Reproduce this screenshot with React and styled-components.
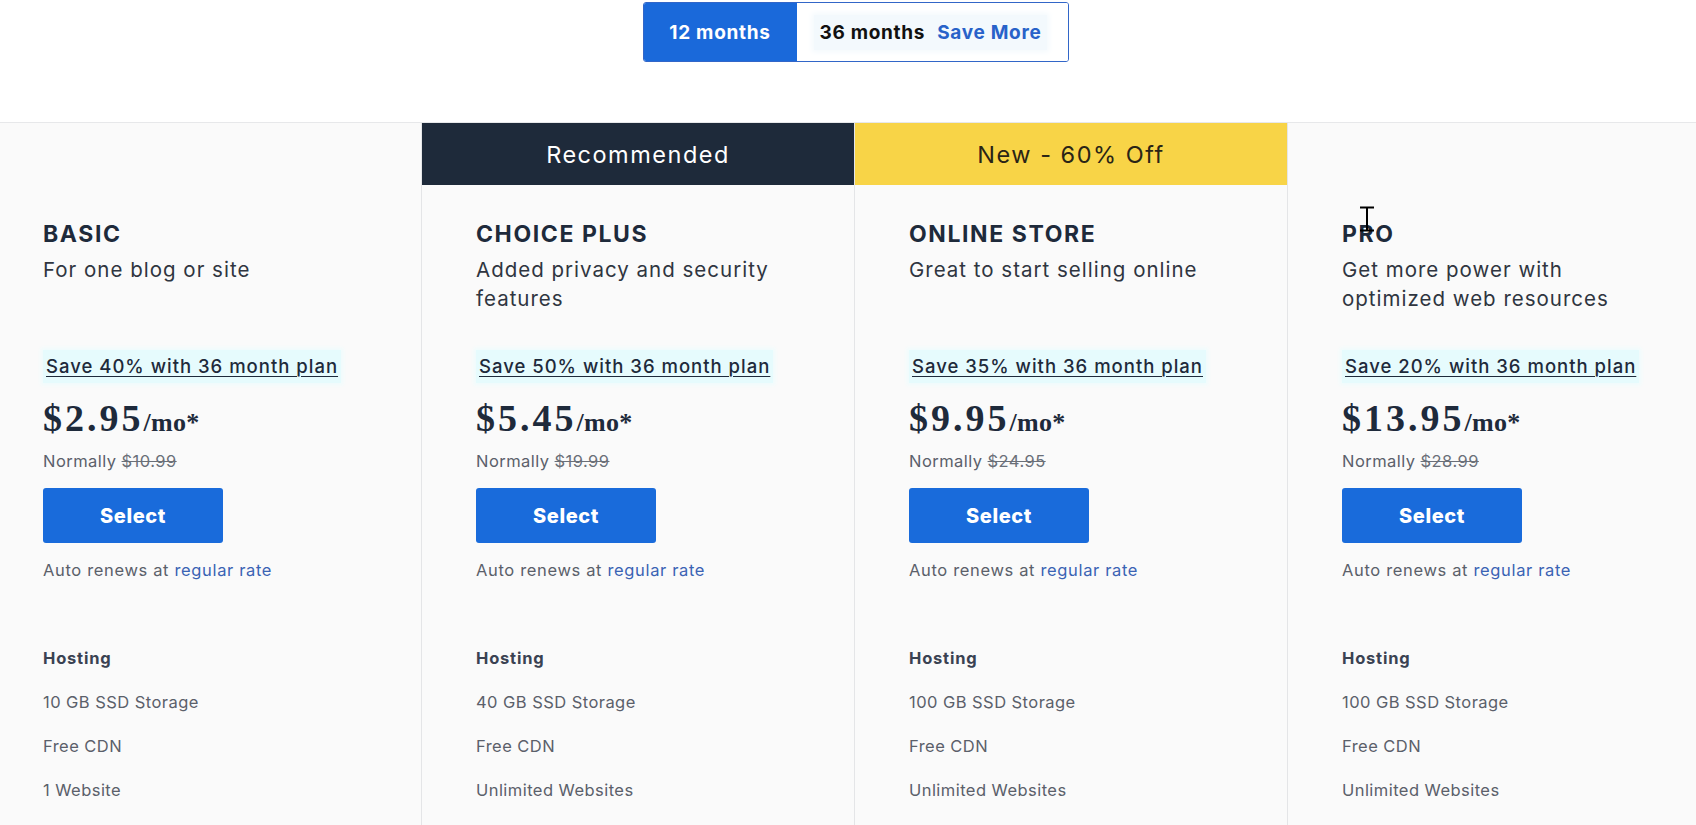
import React from "react";
import styled, { createGlobalStyle } from "styled-components";

const Global = createGlobalStyle`
  html, body { margin: 0; padding: 0; overflow: hidden; background: #ffffff; }
  body { font-family: Inter, "Noto Sans", Arial, sans-serif; color: #1e2a3b; }
  * { box-sizing: border-box; }
`;

const Page = styled.div`
  width: 1696px;
  min-height: 825px;
  display: flex;
  flex-direction: column;
`;

const Header = styled.header`
  height: 123px;
  padding-top: 2px;
  display: flex;
  justify-content: center;
  border-bottom: 1px solid #e7e8ea;
  background: #fff;
`;

const Toggle = styled.div`
  display: flex;
  height: 60px;
  border: 1px solid #3266c8;
  border-radius: 3px;
  overflow: hidden;
  margin-left: 15px;
`;

const Seg = styled.button`
  border: 0;
  margin: 0;
  font-family: inherit;
  font-weight: 700;
  font-size: 19px;
  letter-spacing: 0.7px;
  display: flex;
  align-items: center;
  cursor: pointer;
  width: ${(p) => p.$w}px;
  background: ${(p) => (p.$active ? "#1a69da" : "#ffffff")};
  color: ${(p) => (p.$active ? "#ffffff" : "#111111")};
  justify-content: ${(p) => (p.$active ? "center" : "flex-start")};
  padding: ${(p) => (p.$active ? "0" : "0 0 0 17px")};
`;

const SegInner = styled.span`
  display: inline-flex;
  align-items: center;
  gap: 12px;
  padding: 6px 6px;
  background: #f3f9fd;
  box-shadow: 0 0 6px 2px #f3f9fd;
`;

const SaveMore = styled.span`
  color: #2862c9;
`;

const Grid = styled.div`
  flex: 1;
  display: grid;
  grid-template-columns: repeat(4, 433px);
  margin-left: -11px;
  position: relative;
`;

const Column = styled.section`
  background: #fafafa;
  border-right: 1px solid #e4e5e7;
  display: flex;
  flex-direction: column;
  min-height: 702px;
`;

const Banner = styled.div`
  height: 62px;
  display: flex;
  align-items: center;
  justify-content: center;
  font-size: 23.5px;
  letter-spacing: 1.5px;
  font-weight: 400;
  background: ${(p) => p.$bg || "transparent"};
  color: ${(p) => p.$fg || "inherit"};
`;

const Body = styled.div`
  padding: 34px 30px 0 54px;
  display: flex;
  flex-direction: column;
  align-items: flex-start;
`;

const Title = styled.h2`
  margin: 0;
  font-size: 23px;
  line-height: 30px;
  font-weight: 700;
  color: #1e2a3b;
  letter-spacing: 1.6px;
`;

const Subtitle = styled.p`
  margin: 6px 0 0;
  font-size: 20.5px;
  line-height: 29px;
  height: 58px;
  font-weight: 400;
  color: #2f3540;
  max-width: 320px;
  letter-spacing: 1px;
`;

const Save = styled.a`
  margin-top: 37px;
  display: inline-block;
  padding: 3px 3px;
  font-size: 18.5px;
  line-height: 27px;
  font-weight: 500;
  color: #1e2a3b;
  text-decoration: underline;
  text-underline-offset: 3px;
  text-decoration-thickness: 1px;
  background: #e6fbfd;
  box-shadow: 0 0 4px 2px #eefcfd;
  letter-spacing: 1px;
`;

const Price = styled.div`
  margin-top: 13px;
  font-family: "Liberation Serif", "Times New Roman", serif;
  font-weight: 700;
  color: #1e2a3b;
  line-height: 44px;
  display: flex;
  align-items: baseline;
`;

const Amount = styled.span`
  font-size: 38px;
  letter-spacing: 3px;
`;

const Per = styled.span`
  font-size: 26px;
  letter-spacing: 0.3px;
`;

const Normal = styled.div`
  margin-top: 5px;
  font-size: 16.5px;
  line-height: 22px;
  color: #5b606a;
  letter-spacing: 0.45px;
`;

const Struck = styled.s`
  color: #6a6f78;
`;

const SelectBtn = styled.button`
  margin-top: 16px;
  width: 180px;
  height: 55px;
  border: 0;
  border-radius: 3px;
  background: #196bdb;
  color: #fff;
  font-family: inherit;
  font-weight: 800;
  font-size: 20px;
  letter-spacing: 0.6px;
  cursor: pointer;
`;

const Renew = styled.div`
  margin-top: 16px;
  font-size: 16.5px;
  line-height: 22px;
  color: #5b606a;
  letter-spacing: 0.65px;
`;

const RateLink = styled.a`
  color: #3a63b4;
  text-decoration: none;
`;

const Features = styled.ul`
  list-style: none;
  margin: 66px 0 0;
  padding: 0;
  display: flex;
  flex-direction: column;
  gap: 22px;
`;

const Feature = styled.li`
  font-size: 16.5px;
  line-height: 22px;
  color: ${(p) => (p.$head ? "#3a4252" : "#5b606a")};
  font-weight: ${(p) => (p.$head ? 700 : 400)};
  letter-spacing: ${(p) => (p.$head ? "0.8px" : "0.45px")};
`;

const Cursor = styled.svg`
  position: absolute;
  left: 1370px;
  top: 83px;
  pointer-events: none;
`;

const plans = [
  {
    name: "BASIC",
    sub: "For one blog or site",
    save: "Save 40% with 36 month plan",
    price: "$2.95",
    normal: "$10.99",
    features: ["10 GB SSD Storage", "Free CDN", "1 Website"],
  },
  {
    name: "CHOICE PLUS",
    sub: "Added privacy and security features",
    save: "Save 50% with 36 month plan",
    price: "$5.45",
    normal: "$19.99",
    features: ["40 GB SSD Storage", "Free CDN", "Unlimited Websites"],
    banner: { text: "Recommended", bg: "#1e2a3a", fg: "#ffffff" },
  },
  {
    name: "ONLINE STORE",
    sub: "Great to start selling online",
    save: "Save 35% with 36 month plan",
    price: "$9.95",
    normal: "$24.95",
    features: ["100 GB SSD Storage", "Free CDN", "Unlimited Websites"],
    banner: { text: "New - 60% Off", bg: "#f8d447", fg: "#2a2416" },
  },
  {
    name: "PRO",
    sub: "Get more power with optimized web resources",
    save: "Save 20% with 36 month plan",
    price: "$13.95",
    normal: "$28.99",
    features: ["100 GB SSD Storage", "Free CDN", "Unlimited Websites"],
  },
];

export default function App() {
  return (
    <>
      <Global />
      <Page>
        <Header>
          <Toggle>
            <Seg $active $w={153}>12 months</Seg>
            <Seg $w={271}>
              <SegInner>
                36 months <SaveMore>Save More</SaveMore>
              </SegInner>
            </Seg>
          </Toggle>
        </Header>
        <Grid>
          {plans.map((p) => (
            <Column key={p.name}>
              <Banner $bg={p.banner?.bg} $fg={p.banner?.fg}>
                {p.banner?.text}
              </Banner>
              <Body>
                <Title>{p.name}</Title>
                <Subtitle>{p.sub}</Subtitle>
                <Save href="#">{p.save}</Save>
                <Price>
                  <Amount>{p.price}</Amount>
                  <Per>/mo*</Per>
                </Price>
                <Normal>
                  Normally <Struck>{p.normal}</Struck>
                </Normal>
                <SelectBtn>Select</SelectBtn>
                <Renew>
                  Auto renews at <RateLink href="#">regular rate</RateLink>
                </Renew>
                <Features>
                  <Feature $head>Hosting</Feature>
                  {p.features.map((f) => (
                    <Feature key={f}>{f}</Feature>
                  ))}
                </Features>
              </Body>
            </Column>
          ))}
          <Cursor width="16" height="26" viewBox="0 0 16 26">
            <path d="M1 1.5h14M8 1.5v23M1 24.5h14" stroke="#000" strokeWidth="2" fill="none" />
          </Cursor>
        </Grid>
      </Page>
    </>
  );
}
